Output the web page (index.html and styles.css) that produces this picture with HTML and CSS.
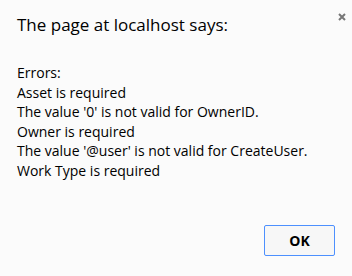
FILE: index.html
```html
<!DOCTYPE html>
<html lang="en">
<head>
  <meta charset="UTF-8">
  <title>The page at localhost says</title>
  <link rel="stylesheet" href="styles.css">
</head>
<body>
  <div class="dialog">
    <div class="dialog-header">
      <h1 class="dialog-title">The page at localhost says:</h1>
      <svg class="dialog-close" width="8" height="8" viewBox="0 0 8 8">
        <path d="M1 1L7 7M7 1L1 7" stroke="#777" stroke-width="2"/>
      </svg>
    </div>
    <div class="dialog-message">
      <div>Errors:</div>
      <div>Asset is required</div>
      <div>The value '0' is not valid for OwnerID.</div>
      <div>Owner is required</div>
      <div>The value '@user' is not valid for CreateUser.</div>
      <div>Work Type is required</div>
    </div>
    <div class="dialog-buttons">
      <button class="btn-ok">OK</button>
    </div>
  </div>
</body>
</html>
```
FILE: styles.css
```css
/* Dialogo de alerta del navegador */
body {
  margin: 0;
  background: #fbfbfb;
  font-family: 'Open Sans', 'Liberation Sans', sans-serif;
  color: #000;
}
.dialog {
  width: 352px;
  height: 276px;
  box-sizing: border-box;
  padding: 0 17px;
  display: flex;
  flex-direction: column;
}
.dialog-header {
  display: flex;
  justify-content: space-between;
  align-items: flex-start;
  padding-top: 13px;
}
.dialog-title {
  margin: 0;
  font-size: 17px;
  font-weight: normal;
  line-height: 24px;
}
.dialog-close {
  margin-right: -11px;
  margin-top: 0;
}
/* Lista de errores */
.dialog-message {
  margin-top: 26px;
  font-size: 14px;
  line-height: 19.6px;
}
.dialog-buttons {
  display: flex;
  justify-content: flex-end;
  margin-top: auto;
  margin-bottom: 20px;
}
.btn-ok {
  width: 71px;
  height: 31px;
  background: #f7f7f7;
  border: 1px solid #4d90fe;
  border-radius: 2px;
  font-family: inherit;
  font-size: 14px;
  font-weight: bold;
  color: #000;
}
```
